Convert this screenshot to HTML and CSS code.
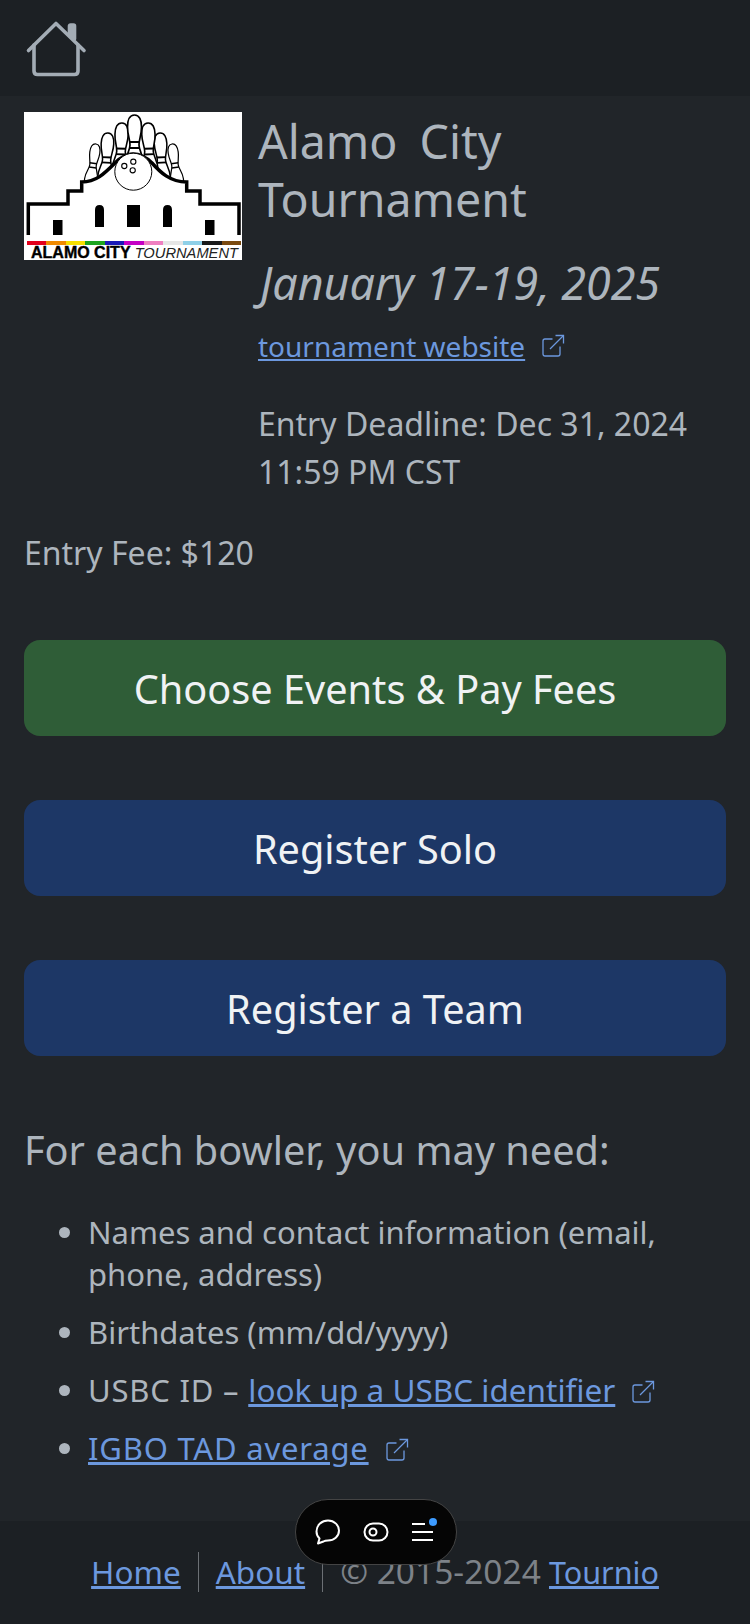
FILE: index.html
```html
<!DOCTYPE html>
<html lang="en">
<head>
<meta charset="utf-8">
<title>Alamo City Tournament</title>
<link rel="stylesheet" href="styles.css">
</head>
<body>
<nav class="topbar">
  <a class="home" href="#" aria-label="Home">
    <svg width="62" height="58" viewBox="0 0 62 58" fill="none" stroke="#a3acb5" stroke-width="3.600" stroke-linecap="round" stroke-linejoin="round">
      <path d="M3.500 30.500 L31 3.500 L59 30.500"/>
      <path d="M9 25 V51 Q9 54.500 12.500 54.500 H49.500 Q53 54.500 53 51 V25"/>
      <path d="M44.500 15 V6 Q44.500 5 45.500 5 H48.500 Q49.500 5 49.500 6 V19 Z" fill="#a3acb5"/>
    </svg>
  </a>
</nav>
<main class="content">
  <section class="head">
    <div class="logo">
      <svg class="logo-art" width="218" height="127" viewBox="0 0 218 127">
        <defs>
          <g id="pin">
            <path d="M0 0 C5 0 7 5 7 12 C7 20 4.500 24 4.500 30 C4.500 36 9 40 9 50 C9 58 6 64 5 72 H-5 C-6 64 -9 58 -9 50 C-9 40 -4.500 36 -4.500 30 C-4.500 24 -7 20 -7 12 C-7 5 -5 0 0 0Z" fill="#fff" stroke="#000" stroke-width="1.700"/>
            <path d="M-5 27 H5 M-5 33 H5" stroke="#000" stroke-width="2"/>
          </g>
        </defs>
        <use href="#pin" transform="translate(72 32) rotate(8) scale(.72)"/>
        <use href="#pin" transform="translate(148 32) rotate(-8) scale(.72)"/>
        <use href="#pin" transform="translate(84 21) rotate(3) scale(.9)"/>
        <use href="#pin" transform="translate(136 21) rotate(-3) scale(.9)"/>
        <use href="#pin" transform="translate(98 11) rotate(2) scale(.95)"/>
        <use href="#pin" transform="translate(124 11) rotate(-2) scale(.95)"/>
        <use href="#pin" transform="translate(110.500 3)"/>
        <path d="M4.300 123 V92 H44 V79 H57.700 V70 C72 70 80 62 91 51 C97 45 103 42 109 42 C116 42 122 45 128 51 C136 60 146 70 162.700 70 V79 H176 V92 H215 V123 Z" fill="#fff"/>
        <path d="M4.300 123 V92 H44 V79 H57.700 V70 C72 70 80 62 91 51 C97 45 103 42 109 42 C116 42 122 45 128 51 C136 60 146 70 162.700 70 V79 H176 V92 H215 V123" fill="none" stroke="#000" stroke-width="3.500"/>
        <circle cx="109.300" cy="59.700" r="18.500" fill="#fff" stroke="#000" stroke-width="1"/>
        <g fill="#fff" stroke="#000" stroke-width="1.100">
          <circle cx="109.300" cy="49.700" r="2.600"/><circle cx="100.300" cy="54" r="2.600"/><circle cx="108.700" cy="58.300" r="2.600"/>
        </g>
        <g fill="#000">
          <rect x="29" y="108" width="9.500" height="15"/>
          <path d="M71 98 Q71 93 75.500 93 Q80 93 80 98 V115 H71Z"/>
          <rect x="103" y="93" width="13" height="22"/>
          <path d="M139 98 Q139 93 143.500 93 Q148 93 148 98 V115 H139Z"/>
          <rect x="181" y="108" width="9.500" height="15"/>
        </g>
      </svg>
      <div class="stripe">
        <i class="c1"></i><i class="c2"></i><i class="c3"></i><i class="c4"></i><i class="c5"></i><i class="c6"></i><i class="c7"></i><i class="c8"></i><i class="c9"></i><i class="c10"></i><i class="c11"></i>
      </div>
      <div class="logo-text"><b>ALAMO CITY</b> <span>TOURNAMENT</span></div>
    </div>
    <div class="info">
      <h1>Alamo City Tournament</h1>
      <p class="date">January 17-19, 2025</p>
      <p class="site"><a href="#">tournament website</a><svg class="ext" viewBox="0 0 24 24" fill="none" stroke="currentColor" stroke-width="1.300"><path d="M19 12.500 V20 Q19 22 17 22 H4 Q2 22 2 20 V7 Q2 5 4 5 H11.500"/><path d="M9 15 L22.500 1.500"/><path d="M14.500 1.500 H22.500 V9.500"/></svg></p>
      <p class="deadline">Entry Deadline: Dec 31, 2024 11:59 PM CST</p>
    </div>
  </section>
  <p class="fee">Entry Fee: $120</p>
  <a class="btn green" href="#">Choose Events &amp; Pay Fees</a>
  <a class="btn blue" href="#">Register Solo</a>
  <a class="btn blue" href="#">Register a Team</a>
  <h2>For each bowler, you may need:</h2>
  <ul class="needs">
    <li>Names and contact information (email, phone, address)</li>
    <li>Birthdates (mm/dd/yyyy)</li>
    <li><span class="wide">USBC ID – </span><a href="#" class="usbc">look up a USBC identifier</a><svg class="ext" viewBox="0 0 24 24" fill="none" stroke="currentColor" stroke-width="1.300"><path d="M19 12.500 V20 Q19 22 17 22 H4 Q2 22 2 20 V7 Q2 5 4 5 H11.500"/><path d="M9 15 L22.500 1.500"/><path d="M14.500 1.500 H22.500 V9.500"/></svg></li>
    <li><a href="#" class="wide">IGBO TAD average</a><svg class="ext" viewBox="0 0 24 24" fill="none" stroke="currentColor" stroke-width="1.300"><path d="M19 12.500 V20 Q19 22 17 22 H4 Q2 22 2 20 V7 Q2 5 4 5 H11.500"/><path d="M9 15 L22.500 1.500"/><path d="M14.500 1.500 H22.500 V9.500"/></svg></li>
  </ul>
</main>
<footer class="foot">
  <a href="#">Home</a><span class="sep"></span><a href="#">About</a><span class="sep"></span><span><span class="copy">© 2015-2024</span> <a href="#" class="brand">Tournio</a></span>
</footer>
<div class="toolbar">
  <svg width="26" height="26" viewBox="0 0 26 26" fill="none" stroke="#fff" stroke-width="2" stroke-linejoin="round"><path d="M3 24.500 L4.500 19.500 Q1.500 16.500 1.500 12.500 C1.500 6 7 1.500 13 1.500 C19.500 1.500 24 6.500 24 11.500 C24 17.500 19 21.500 13 21.500 Q10 21.500 8.500 22.500 Z"/></svg>
  <svg width="26" height="20" viewBox="0 0 26 20" fill="none" stroke="#fff" stroke-width="2"><rect x="1.500" y="1.500" width="23" height="17" rx="8.500"/><circle cx="10" cy="10" r="3.500"/></svg>
  <span class="menu"><svg width="24" height="22" viewBox="0 0 24 22" fill="none" stroke="#fff" stroke-width="2"><path d="M1 3 H14"/><path d="M1 11 H22"/><path d="M1 19 H22"/></svg><span class="dot"></span></span>
</div>
</body>
</html>
```
FILE: styles.css
```css
* { box-sizing: border-box; }
html, body { margin: 0; padding: 0; }
body {
  width: 750px;
  height: 1624px;
  overflow: hidden;
  position: relative;
  background: #212529;
  color: #adb5bd;
  font-family: "Noto Sans", sans-serif;
  font-size: 28px;
  line-height: 42px;
  display: flex;
  flex-direction: column;
}
a { color: #6c98de; }
.topbar { height: 96px; background: #1c2024; padding: 20px 25px; flex: none; }
.home { display: block; width: 62px; height: 58px; }
.home svg { display: block; }
.content { flex: 1; padding: 16px 24px 0; }
.head { display: flex; gap: 16px; align-items: flex-start; }
.logo { width: 218px; height: 148px; background: #fff; flex: none; overflow: hidden; }
.logo-art { display: block; }
.stripe { display: flex; height: 4px; margin: 2px 1px 0 3px; }
.stripe i { flex: 1; }
.c1 { background: #e3001b; } .c2 { background: #f08a00; } .c3 { background: #f7e000; } .c4 { background: #1ea51e; }
.c5 { background: #1a1ab8; } .c6 { background: #c400c4; } .c7 { background: #ee7fc0; } .c8 { background: #e6e6e6; }
.c9 { background: #8fd0e8; } .c10 { background: #1a1a1a; } .c11 { background: #7a4a10; }
.logo-text { color: #000; font-size: 14.700px; line-height: 15px; margin: 0 0 0 7px; white-space: nowrap; font-family: "Liberation Sans", sans-serif; }
.logo-text b { font-size: 16px; font-weight: 700; -webkit-text-stroke: 0.400px #000; }
.logo-text span { font-style: italic; font-weight: 400; color: #222; }
.info { flex: 1; }
h1 { margin: 0; font-size: 46.500px; line-height: 58px; font-weight: 400; word-spacing: 10px; }
.date { margin: 30px 0 0 2px; font-size: 44.800px; line-height: 50px; font-style: italic; }
.site { margin: 17px 0 0; line-height: 42px; display: flex; align-items: center; }
.deadline { margin: 33px 0 0; font-size: 32px; line-height: 48px; }
.ext { width: 24px; height: 24px; color: #6c98de; margin-left: 16px; vertical-align: -2px; }
.fee { margin: 36px 0 0; font-size: 32px; }
.btn {
  display: flex; align-items: center; justify-content: center;
  height: 96px; padding-top: 2px; border-radius: 16px; color: #f0f2f4; text-decoration: none; font-size: 39.700px;
}
.green { background: #2f5d37; margin-top: 66px; }
.blue { background: #1d3766; margin-top: 64px; }
h2 { margin: 70px 0 0; font-size: 39.700px; line-height: 48px; font-weight: 400; }
.needs { margin: 37px 0 0; padding: 0 0 0 64px; font-size: 31px; line-height: 42px; }
.needs li { margin-bottom: 16px; }
.wide { letter-spacing: 0.800px; }
.usbc { font-size: 31.500px; }
.foot {
  height: 103px; padding-bottom: 2px; flex: none; background: #1c2024; display: flex; justify-content: center; align-items: center;
  color: #7d8288; font-size: 31.500px;
}
.copy { font-size: 33.500px; }
.brand { font-size: 30.500px; }
.sep { width: 1px; height: 40px; background: #6c7075; margin: 0 17px; }
.toolbar {
  position: absolute; left: 295px; top: 1499px; width: 162px; height: 66px; padding-right: 2px;
  background: #050505; border: 1px solid #444; border-radius: 33px;
  display: flex; align-items: center; justify-content: center; gap: 22px;
}
.menu { position: relative; display: flex; }
.dot { position: absolute; right: -2px; top: -3px; width: 8px; height: 8px; border-radius: 50%; background: #3d9bff; }
```
